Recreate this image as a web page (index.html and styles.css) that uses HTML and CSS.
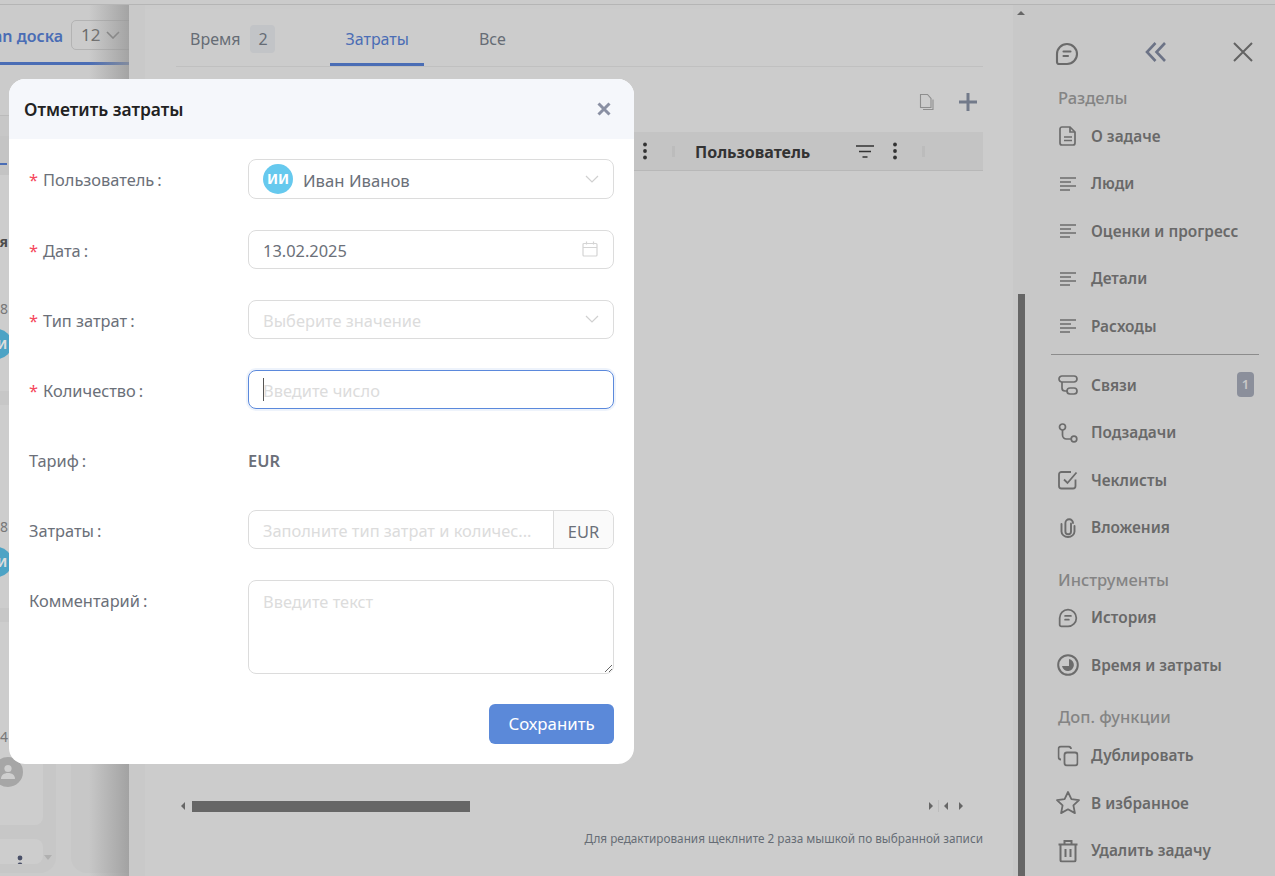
FILE: index.html
```html
<!DOCTYPE html>
<html lang="ru">
<head>
    <meta charset="UTF-8">
    <title>Отметить затраты</title>
    <link rel="stylesheet" href="styles.css">
</head>
<body>

    <div class="topbar"></div>

    <div class="app">

        <!-- board behind the task panel -->
        <div class="board">
            <div class="board-head">
                <span class="board-title">Kanban доска</span>
                <span class="board-select">12
                    <svg width="14" height="8" viewBox="0 0 14 8"><path d="M1 1l6 6 6-6" fill="none" stroke="#7d7d7d" stroke-width="1.6"/></svg>
                </span>
            </div>
            <div class="board-cols">
                <div class="col col-a">
                    <div class="col-head"><span class="col-mark"></span></div>
                    <div class="card card-one">
                        <div class="card-line card-bold">Новая</div>
                        <div class="card-line card-num">18</div>
                        <div class="avatar avatar-blue">ИИ</div>
                    </div>
                    <div class="card card-two">
                        <div class="card-line card-num">18</div>
                        <div class="avatar avatar-blue">ИИ</div>
                    </div>
                    <div class="card card-three">
                        <div class="card-line card-num">14</div>
                        <div class="avatar avatar-gray">
                            <svg width="20" height="20" viewBox="0 0 20 20"><circle cx="10" cy="6.5" r="3.6" fill="#cfcfcf"/><path d="M3 17c0-4 3-6 7-6s7 2 7 6z" fill="#cfcfcf"/></svg>
                        </div>
                    </div>
                    <div class="card card-four">
                        <svg class="card-dots" width="6" height="20" viewBox="0 0 6 20"><circle cx="3" cy="3" r="2.4"/><circle cx="3" cy="10" r="2.4"/><circle cx="3" cy="17" r="2.4"/></svg>
                    </div>
                    <span class="col-arrow"></span>
                </div>
                <div class="col col-b"></div>
            </div>
        </div>

        <div class="panel-edge"></div>

        <!-- task panel -->
        <div class="panel">
            <div class="tabs">
                <div class="tab">Время <span class="tab-badge">2</span></div>
                <div class="tab tab-active">Затраты</div>
                <div class="tab">Все</div>
            </div>

            <div class="toolbar">
                <svg class="tool-doc" width="16" height="18" viewBox="0 0 16 18" fill="none" stroke="#8e8e8e" stroke-width="1.1">
                    <path d="M1.5 1.5h7l3.5 4v9h-10.5z"/><path d="M14 6.5v10h-10"/>
                </svg>
                <svg width="18" height="18" viewBox="0 0 18 18"><path d="M9 0v18M0 9h18" stroke="#727a8a" stroke-width="3"/></svg>
            </div>

            <div class="table-head">
                <div class="th-first">
                    <svg class="dots" width="4" height="18" viewBox="0 0 4 18"><circle cx="2" cy="2.5" r="1.9"/><circle cx="2" cy="9" r="1.9"/><circle cx="2" cy="15.5" r="1.9"/></svg>
                    <span class="th-sep"></span>
                </div>
                <div class="th-user">
                    <span class="th-title">Пользователь</span>
                    <svg class="th-filter" width="18" height="13" viewBox="0 0 18 13"><path d="M0 1h18M3 6.5h12M6.5 12h5" stroke="#333" stroke-width="1.7"/></svg>
                    <svg class="dots" width="4" height="18" viewBox="0 0 4 18"><circle cx="2" cy="2.5" r="1.9"/><circle cx="2" cy="9" r="1.9"/><circle cx="2" cy="15.5" r="1.9"/></svg>
                    <span class="th-sep"></span>
                </div>
            </div>

            <div class="table-body"></div>

            <div class="hscroll">
                <span class="arrow-left"></span>
                <span class="hscroll-thumb"></span>
                <span class="hscroll-space"></span>
                <span class="arrow-right"></span>
                <span class="hscroll-sep"></span>
                <span class="arrow-left"></span>
                <span class="arrow-right arrow-last"></span>
            </div>

            <div class="hint">Для редактирования щеклните 2 раза мышкой по выбранной записи</div>
        </div>

        <div class="vscroll">
            <span class="arrow-up"></span>
            <span class="vscroll-thumb"></span>
        </div>

        <!-- right menu -->
        <div class="side">
            <div class="side-top">
                <svg width="24" height="24" viewBox="0 0 24 24" fill="none" stroke="#6a6a6a" stroke-width="2.1" stroke-linecap="round">
                    <path d="M2 12a10 10 0 1 1 10 10H4a2 2 0 0 1-2-2z"/><path d="M8.5 9.5h7M8.5 14h4.5"/>
                </svg>
                <svg width="22" height="20" viewBox="0 0 22 20" fill="none" stroke="#6c7386" stroke-width="2.6">
                    <path d="M10.5 1L2 10l8.5 9M20 1l-8.5 9 8.5 9"/>
                </svg>
                <svg width="20" height="20" viewBox="0 0 20 20" fill="none" stroke="#636363" stroke-width="2">
                    <path d="M1 1l18 18M19 1L1 19"/>
                </svg>
            </div>

            <div class="side-title">Разделы</div>
            <div class="side-item">
                <svg class="side-icon" width="18" height="20" viewBox="0 0 18 20" fill="none" stroke="#6c6c6c" stroke-width="1.7"><path d="M3 1h8l5 5v11a2 2 0 0 1-2 2H3a2 2 0 0 1-2-2V3a2 2 0 0 1 2-2z"/><path d="M11 1v5h5M5 11h8M5 14.5h8"/></svg>
                О задаче
            </div>
            <div class="side-item">
                <svg class="side-icon" width="18" height="16" viewBox="0 0 18 16" stroke="#6c6c6c" stroke-width="1.7"><path d="M1 2h16M1 6h11M1 10h16M1 14h10"/></svg>
                Люди
            </div>
            <div class="side-item">
                <svg class="side-icon" width="18" height="16" viewBox="0 0 18 16" stroke="#6c6c6c" stroke-width="1.7"><path d="M1 2h16M1 6h11M1 10h16M1 14h10"/></svg>
                Оценки и прогресс
            </div>
            <div class="side-item">
                <svg class="side-icon" width="18" height="16" viewBox="0 0 18 16" stroke="#6c6c6c" stroke-width="1.7"><path d="M1 2h16M1 6h11M1 10h16M1 14h10"/></svg>
                Детали
            </div>
            <div class="side-item">
                <svg class="side-icon" width="18" height="16" viewBox="0 0 18 16" stroke="#6c6c6c" stroke-width="1.7"><path d="M1 2h16M1 6h11M1 10h16M1 14h10"/></svg>
                Расходы
            </div>

            <div class="side-line"></div>

            <div class="side-item">
                <svg class="side-icon" width="20" height="20" viewBox="0 0 20 20" fill="none" stroke="#6c6c6c" stroke-width="1.7"><rect x="1" y="1" width="18" height="6" rx="3"/><rect x="9" y="13" width="10" height="6" rx="3"/><path d="M4 7v6a3 3 0 0 0 3 3h2"/></svg>
                Связи
                <span class="side-badge">1</span>
            </div>
            <div class="side-item">
                <svg class="side-icon" width="20" height="20" viewBox="0 0 20 20" fill="none" stroke="#6c6c6c" stroke-width="1.7"><circle cx="4.5" cy="4" r="3"/><circle cx="16" cy="16" r="2.8"/><path d="M4.5 7v5a4 4 0 0 0 4 4h4.7"/></svg>
                Подзадачи
            </div>
            <div class="side-item">
                <svg class="side-icon" width="20" height="20" viewBox="0 0 20 20" fill="none" stroke="#6c6c6c" stroke-width="1.8"><path d="M17.5 9.5V16a2.5 2.5 0 0 1-2.5 2.5H3.5A2.5 2.5 0 0 1 1 16V4.5A2.5 2.5 0 0 1 3.5 2H13"/><path d="M6 9.5l3.5 3.5L18.5 2.500"/></svg>
                Чеклисты
            </div>
            <div class="side-item">
                <svg class="side-icon" width="18" height="20" viewBox="0 0 18 20" fill="none" stroke="#6c6c6c" stroke-width="1.9" stroke-linecap="round"><path d="M12 5.5v8a2.8 2.8 0 0 1-5.6 0V5a3.8 3.8 0 0 1 7.6 0"/><path d="M2.5 6v7.5a6.5 5.5 0 0 0 13 0V8"/></svg>
                Вложения
            </div>

            <div class="side-title side-title-tools">Инструменты</div>
            <div class="side-item">
                <svg class="side-icon" width="20" height="20" viewBox="0 0 24 24" fill="none" stroke="#6c6c6c" stroke-width="2.1" stroke-linecap="round"><path d="M2 12a10 10 0 1 1 10 10H4a2 2 0 0 1-2-2z"/><path d="M8.5 9.5h7M8.5 14h4.5"/></svg>
                История
            </div>
            <div class="side-item">
                <svg class="side-icon" width="22" height="22" viewBox="0 0 22 22"><circle cx="11" cy="11" r="9.8" fill="none" stroke="#6c6c6c" stroke-width="2"/><path d="M12 5a6 6 0 1 1-7 7h7z" fill="#6c6c6c"/></svg>
                Время и затраты
            </div>

            <div class="side-title side-title-more">Доп. функции</div>
            <div class="side-item">
                <svg class="side-icon" width="21" height="21" viewBox="0 0 21 21" fill="none" stroke="#6c6c6c" stroke-width="1.8"><rect x="7" y="7" width="13" height="13" rx="2.5"/><path d="M3.5 14A2.5 2.5 0 0 1 1 11.5v-8A2.5 2.5 0 0 1 3.5 1H11A2.5 2.5 0 0 1 13.500 3.500"/></svg>
                Дублировать
            </div>
            <div class="side-item">
                <svg class="side-icon" width="25" height="25" viewBox="0 0 25 25" fill="none" stroke="#6c6c6c" stroke-width="1.8" stroke-linejoin="round"><path d="M12.5 1.5l3.4 7.1 7.6 1-5.600 5.300 1.500 7.700-6.900-3.800-6.900 3.800 1.500-7.700L1.500 9.600l7.600-1z"/></svg>
                В избранное
            </div>
            <div class="side-item">
                <svg class="side-icon" width="21" height="23" viewBox="0 0 21 23" fill="none" stroke="#6c6c6c" stroke-width="2"><path d="M1 5h19M7 5V1.5h7V5M3 5v15.5a1.5 1.5 0 0 0 1.5 1.5h12a1.5 1.5 0 0 0 1.500-1.500V5M8 9.500v8M13 9.500v8"/></svg>
                Удалить задачу
            </div>
        </div>
    </div>

    <!-- cost dialog -->
    <div class="modal">
        <div class="modal-head">
            <span class="modal-title">Отметить затраты</span>
            <svg width="14" height="14" viewBox="0 0 14 14"><path d="M1.5 1.5l11 11M12.5 1.5l-11 11" stroke="#8a90a3" stroke-width="3"/></svg>
        </div>

        <div class="modal-body">
            <div class="form-row">
                <label class="form-label"><span class="req">*</span>Пользователь<span class="colon">:</span></label>
                <div class="field field-user">
                    <span class="user-avatar">ИИ</span>
                    <span class="field-value field-name">Иван Иванов</span>
                    <svg class="field-chevron" width="14" height="8" viewBox="0 0 14 8"><path d="M1 1l6 6 6-6" fill="none" stroke="#d0d0d0" stroke-width="1.2"/></svg>
                </div>
            </div>

            <div class="form-row">
                <label class="form-label"><span class="req">*</span>Дата<span class="colon">:</span></label>
                <div class="field">
                    <span class="field-value">13.02.2025</span>
                    <svg class="field-chevron field-date" width="16" height="16" viewBox="0 0 16 16" fill="none" stroke="#d4d4d4" stroke-width="1.2"><rect x="1" y="2.5" width="14" height="12.5" rx="1"/><path d="M1 6.5h14M4.5 0.5v3M11.5 0.5v3"/></svg>
                </div>
            </div>

            <div class="form-row">
                <label class="form-label"><span class="req">*</span>Тип затрат<span class="colon">:</span></label>
                <div class="field">
                    <span class="field-empty">Выберите значение</span>
                    <svg class="field-chevron" width="14" height="8" viewBox="0 0 14 8"><path d="M1 1l6 6 6-6" fill="none" stroke="#d0d0d0" stroke-width="1.2"/></svg>
                </div>
            </div>

            <div class="form-row">
                <label class="form-label"><span class="req">*</span>Количество<span class="colon">:</span></label>
                <div class="field field-focus">
                    <span class="caret"></span>
                    <span class="field-empty">Введите число</span>
                </div>
            </div>

            <div class="form-row">
                <label class="form-label">Тариф<span class="colon">:</span></label>
                <div class="form-plain">EUR</div>
            </div>

            <div class="form-row">
                <label class="form-label">Затраты<span class="colon">:</span></label>
                <div class="field field-addon">
                    <span class="field-empty addon-text">Заполните тип затрат и количес...</span>
                    <span class="addon">EUR</span>
                </div>
            </div>

            <div class="form-row">
                <label class="form-label">Комментарий<span class="colon">:</span></label>
                <textarea class="field-area" placeholder="Введите текст"></textarea>
            </div>

            <div class="modal-foot">
                <button class="btn-save">Сохранить</button>
            </div>
        </div>
    </div>

</body>
</html>
```

FILE: styles.css
```css
* {
    box-sizing: border-box;
}

html, body {
    height: 100%;
}

body {
    margin: 0;
    background-color: #cbcbcb;
    font-family: "Noto Sans", Arial, sans-serif;
    font-size: 16px;
    color: #666;
    overflow: hidden;
    position: relative;
}

.topbar {
    height: 5px;
    border-bottom: 1px solid #b5b5b5;
}

.app {
    display: flex;
    height: 871px;
}

/* board */
.board {
    width: 129px;
    flex: none;
    overflow: hidden;
    position: relative;
}

.board::after {
    content: "";
    position: absolute;
    top: 0;
    right: 0;
    bottom: 0;
    width: 40px;
    background: linear-gradient(to right, rgba(150, 150, 150, 0), rgba(150, 150, 150, 0.75));
}

.board-head {
    height: 60px;
    padding-top: 15px;
    border-bottom: 3px solid #4a6db5;
    display: flex;
    justify-content: flex-end;
    gap: 8px;
    margin-right: -40px;
    white-space: nowrap;
}

.board-title {
    flex: none;
    color: #4a6db5;
    font-weight: 600;
    line-height: 32px;
}

.board-select {
    flex: none;
    width: 98px;
    height: 30px;
    border: 1px solid #b3b3b3;
    border-radius: 5px;
    padding-left: 9px;
    line-height: 28px;
    font-size: 17px;
    color: #6c6c6c;
    display: flex;
    align-items: center;
    gap: 6px;
}

.board-cols {
    display: flex;
    gap: 15px;
    padding-top: 50px;
}

.col {
    flex: none;
    background-color: #c7c7c7;
    height: 758px;
    overflow: hidden;
}

.col-a {
    width: 56px;
    padding-right: 13px;
    position: relative;
    border-top: 1px solid #bbb;
    border-radius: 0 0 16px 0;
}

.col-b {
    width: 70px;
    border-radius: 0 0 0 16px;
}

.col-head {
    margin-top: 20px;
    height: 39px;
    position: relative;
    background-color: #c4c4c4;
}

.col-mark {
    display: block;
    position: absolute;
    left: 0;
    top: 27px;
    width: 7px;
    height: 2px;
    background-color: #4a6db5;
}

.card {
    background-color: #cdcdcd;
    border-radius: 0 8px 8px 0;
    margin-bottom: 14px;
}

.card-one {
    height: 216px;
    padding-top: 57px;
}

.card-two {
    height: 203px;
    padding-top: 112px;
}

.card-three {
    height: 203px;
    padding-top: 105px;
}

.card-four {
    height: 25px;
    padding: 16px 0 0 17px;
    margin-bottom: 0;
    overflow: hidden;
}

.card-line {
    width: 8px;
    display: flex;
    justify-content: flex-end;
    white-space: nowrap;
    font-size: 14px;
    line-height: 20px;
    color: #777;
}

.card-bold {
    font-weight: 700;
    color: #4c4c4c;
    margin-bottom: 47px;
}

.card-num {
    margin-bottom: 10px;
}

.avatar {
    width: 30px;
    height: 30px;
    border-radius: 50%;
    font-size: 13px;
    font-weight: 700;
    color: #ddd;
    display: flex;
    align-items: center;
    justify-content: center;
}

.avatar-blue {
    background-color: #4da3c5;
    margin-left: -18px;
}

.avatar-gray {
    background-color: #a6a6a6;
    margin-left: -7px;
}

.card-dots {
    fill: #4a5068;
    display: block;
}

.col-arrow {
    position: absolute;
    right: 4px;
    bottom: 13px;
    border: 4px solid transparent;
    border-top: 5px solid #b0b0b0;
    border-bottom: 0;
}

/* task panel */
.panel-edge {
    width: 16px;
    flex: none;
    background-color: #c9c9c9;
}

.panel {
    width: 868px;
    flex: none;
    margin-top: 4px;
    padding: 0 30px 30px 31px;
    background-color: #cccccc;
    display: flex;
    flex-direction: column;
}

.tabs {
    display: flex;
    height: 58px;
    border-bottom: 1px solid #c0c0c0;
    padding-top: 16px;
}

.tab {
    padding: 0 14px;
    margin-right: 41px;
    line-height: 28px;
    color: #666c75;
    display: flex;
    gap: 10px;
    align-items: flex-start;
    height: 41px;
}

.tab-badge {
    width: 25px;
    height: 28px;
    border-radius: 4px;
    background-color: #c2c4c7;
    text-align: center;
}

.tab-active {
    padding: 0 15px;
    color: #4a6db5;
    border-bottom: 3px solid #4a6db5;
}

.toolbar {
    height: 65px;
    display: flex;
    justify-content: flex-end;
    align-items: center;
    gap: 24px;
    padding-right: 6px;
    padding-top: 4px;
}

.tool-doc {
    display: block;
}

.table-head {
    height: 39px;
    background-color: #c4c4c4;
    border-bottom: 1px solid #b8b8b8;
    display: flex;
    align-items: center;
}

.dots {
    fill: #333;
    flex: none;
}

.th-first {
    width: 499px;
    flex: none;
    display: flex;
    justify-content: flex-end;
    align-items: center;
}

.th-sep {
    width: 3px;
    height: 11px;
    background-color: #bcbcbc;
    margin-left: 25px;
    flex: none;
}

.th-user {
    padding-left: 20px;
    display: flex;
    align-items: center;
}

.th-title {
    font-weight: 700;
    color: #333;
    width: 161px;
    margin-top: 2px;
    white-space: nowrap;
}

.th-filter {
    flex: none;
}

.th-user .dots {
    margin-left: 19px;
}

.table-body {
    flex: 1;
}

.hscroll {
    height: 12px;
    display: flex;
    align-items: center;
    padding-left: 5px;
    margin-bottom: 18px;
}

.arrow-left {
    border: 4px solid transparent;
    border-right: 4px solid #666;
    border-left: 0;
}

.arrow-right {
    border: 4px solid transparent;
    border-left: 4px solid #666;
    border-right: 0;
}

.hscroll-thumb {
    width: 278px;
    height: 11px;
    background-color: #666;
    margin-left: 7px;
}

.hscroll-space {
    flex: 1;
}

.hscroll-sep {
    width: 1px;
    height: 12px;
    background-color: #bdbdbd;
    margin: 0 5px;
}

.arrow-last {
    margin-left: 11px;
    margin-right: 20px;
}

.hint {
    text-align: right;
    font-size: 11.75px;
    line-height: 16px;
    color: #666c75;
}

/* task panel scrollbar */
.vscroll {
    width: 17px;
    flex: none;
    background-color: #c8c8c8;
    padding: 6px 0 0 5px;
    display: flex;
    flex-direction: column;
}

.arrow-up {
    display: block;
    width: 0;
    margin-left: -1px;
    border: 4px solid transparent;
    border-bottom: 4px solid #666;
    border-top: 0;
}

.vscroll-thumb {
    display: block;
    width: 7px;
    height: 582px;
    margin-top: 279px;
    background-color: #666;
}

/* right menu */
.side {
    flex: 1;
    background-color: #c8c8c8;
    padding: 0 21px 0 28px;
    font-size: 15.4px;
    font-weight: 600;
    color: #696969;
}

.side-top {
    height: 83px;
    padding-top: 37px;
    padding-right: 1px;
    display: flex;
    justify-content: space-between;
    align-items: flex-start;
    margin-left: -3px;
}

.side-title {
    height: 20px;
    line-height: 20px;
    font-size: 16.5px;
    font-weight: 500;
    color: #848484;
    margin-bottom: 4.6px;
}

.side-title-tools {
    margin-top: 18px;
}

.side-title-more {
    margin-top: 18px;
    margin-bottom: 5px;
}

.side-item {
    height: 47.5px;
    padding-left: 33px;
    display: flex;
    align-items: center;
    position: relative;
    white-space: nowrap;
}

.side-icon {
    position: absolute;
    left: 10px;
    top: 50%;
    transform: translate(-50%, -50%);
}

.side-line {
    height: 1px;
    margin: 4px -5px 6.5px -7px;
    background-color: #8c8c8c;
}

.side-badge {
    position: absolute;
    right: 0;
    top: 10px;
    width: 17px;
    height: 25px;
    border-radius: 4px;
    background-color: #8b8f9b;
    color: #c8c8c8;
    font-size: 13px;
    line-height: 25px;
    text-align: center;
}

/* dialog */
.modal {
    position: absolute;
    left: 9px;
    top: 79px;
    width: 625px;
    height: 685px;
    background-color: #fff;
    border-radius: 16px;
    overflow: hidden;
    font-size: 16.4px;
}

.modal-head {
    height: 60px;
    background-color: #f5f7fb;
    padding: 0 23px 0 15px;
    display: flex;
    justify-content: space-between;
    align-items: center;
}

.modal-title {
    font-size: 17.4px;
    font-weight: 600;
    color: #222;
}

.modal-body {
    padding: 20px 20px 0 20px;
}

.form-row {
    display: flex;
    min-height: 39.2px;
    margin-bottom: 30.8px;
}

.form-label {
    width: 219px;
    height: 39px;
    flex: none;
    line-height: 41px;
    color: #6b7079;
    white-space: nowrap;
}

.req {
    color: #f5475b;
    margin-right: 5px;
}

.colon {
    margin-left: 3px;
}

.field {
    flex: 1;
    border: 1px solid #dcdcdc;
    border-radius: 8px;
    padding: 0 14px;
    display: flex;
    align-items: center;
    position: relative;
}

.field-user {
    min-height: 40px;
}

.field-value {
    color: #6b7079;
    flex: 1;
    padding-top: 3px;
}

.field-name {
    font-size: 16.7px;
}

.field-empty {
    color: #dcdcdc;
    flex: 1;
    padding-top: 3px;
}

.user-avatar {
    width: 30px;
    height: 30px;
    border-radius: 50%;
    background-color: #66c9ee;
    color: #fff;
    font-size: 14px;
    font-weight: 700;
    text-align: center;
    line-height: 30px;
    margin-right: 10px;
}

.field-chevron {
    flex: none;
}

.field-date {
    margin-right: 1px;
}

.field-focus {
    border-color: #5b89dc;
    box-shadow: 0 0 0 2px rgba(91, 137, 220, 0.1);
}

.caret {
    position: absolute;
    left: 14px;
    top: 7px;
    width: 1px;
    height: 23px;
    background-color: #555;
}

.form-plain {
    height: 39px;
    font-weight: 600;
    color: #6b7079;
    line-height: 41px;
}

.field-addon {
    height: 39px;
    padding: 0 0 0 14px;
}

.addon-text {
    white-space: nowrap;
}

.addon {
    width: 60px;
    height: 37px;
    border-left: 1px solid #dcdcdc;
    background-color: #fafafa;
    border-radius: 0 8px 8px 0;
    color: #6b7079;
    line-height: 41px;
    text-align: center;
    overflow: hidden;
}

.field-area {
    flex: 1;
    height: 94px;
    border: 1px solid #dcdcdc;
    border-radius: 8px;
    padding: 9px 14px;
    font-family: inherit;
    font-size: 16.4px;
    outline: none;
}

.field-area::placeholder {
    color: #dcdcdc;
}

.modal-foot {
    display: flex;
    justify-content: flex-end;
    margin-top: -1px;
}

.btn-save {
    width: 125px;
    height: 40px;
    background-color: #5b89d9;
    color: #fff;
    border: none;
    border-radius: 6px;
    font-family: inherit;
    font-size: 16.8px;
}
```
